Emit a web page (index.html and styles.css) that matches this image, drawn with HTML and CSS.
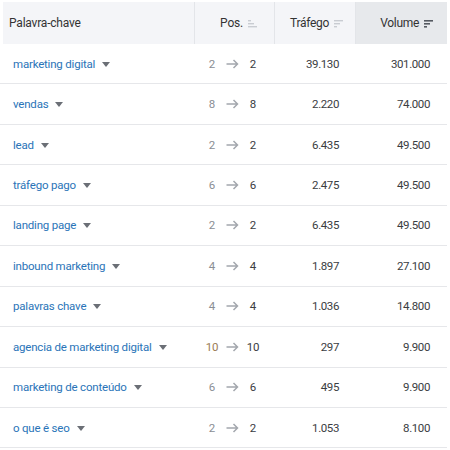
FILE: index.html
```html
<!DOCTYPE html>
<html lang="pt">
<head>
<meta charset="utf-8">
<link rel="stylesheet" href="styles.css">
</head>
<body>
<div class="table">
  <div class="row head">
    <div class="cell kw"><span class="htxt">Palavra-chave</span></div>
    <div class="cell pos"><span class="htxt">Pos.</span>
      <svg class="sort" width="9" height="9" viewBox="0 0 9 9"><rect x="0" y="1" width="3" height="1.4"/><rect x="0" y="4" width="6" height="1.4"/><rect x="0" y="7" width="9" height="1.4"/></svg>
    </div>
    <div class="cell num traf"><span class="htxt">Tráfego</span>
      <svg class="sort" width="9" height="9" viewBox="0 0 9 9"><rect x="0" y="1" width="9" height="1.4"/><rect x="0" y="4" width="6" height="1.4"/><rect x="0" y="7" width="3" height="1.4"/></svg>
    </div>
    <div class="cell num vol"><span class="htxt">Volume</span>
      <svg class="sort active" width="9" height="9" viewBox="0 0 9 9"><rect x="0" y="1" width="9" height="1.6"/><rect x="0" y="4" width="6" height="1.6"/><rect x="0" y="7" width="3" height="1.6"/></svg>
    </div>
  </div>

  <div class="row"><div class="cell kw"><a class="link">marketing digital</a><span class="caret"></span></div><div class="cell pos"><span class="p1">2</span><svg class="arr" width="13" height="10" viewBox="0 0 13 10"><path d="M0.5 5H11.5M7.5 1L11.5 5L7.5 9"/></svg><span class="p2">2</span></div><div class="cell num">39.130</div><div class="cell num">301.000</div></div>
  <div class="row"><div class="cell kw"><a class="link">vendas</a><span class="caret"></span></div><div class="cell pos"><span class="p1">8</span><svg class="arr" width="13" height="10" viewBox="0 0 13 10"><path d="M0.5 5H11.5M7.5 1L11.5 5L7.5 9"/></svg><span class="p2">8</span></div><div class="cell num">2.220</div><div class="cell num">74.000</div></div>
  <div class="row"><div class="cell kw"><a class="link">lead</a><span class="caret"></span></div><div class="cell pos"><span class="p1">2</span><svg class="arr" width="13" height="10" viewBox="0 0 13 10"><path d="M0.5 5H11.5M7.5 1L11.5 5L7.5 9"/></svg><span class="p2">2</span></div><div class="cell num">6.435</div><div class="cell num">49.500</div></div>
  <div class="row"><div class="cell kw"><a class="link">tráfego pago</a><span class="caret"></span></div><div class="cell pos"><span class="p1">6</span><svg class="arr" width="13" height="10" viewBox="0 0 13 10"><path d="M0.5 5H11.5M7.5 1L11.5 5L7.5 9"/></svg><span class="p2">6</span></div><div class="cell num">2.475</div><div class="cell num">49.500</div></div>
  <div class="row"><div class="cell kw"><a class="link">landing page</a><span class="caret"></span></div><div class="cell pos"><span class="p1">2</span><svg class="arr" width="13" height="10" viewBox="0 0 13 10"><path d="M0.5 5H11.5M7.5 1L11.5 5L7.5 9"/></svg><span class="p2">2</span></div><div class="cell num">6.435</div><div class="cell num">49.500</div></div>
  <div class="row"><div class="cell kw"><a class="link">inbound marketing</a><span class="caret"></span></div><div class="cell pos"><span class="p1">4</span><svg class="arr" width="13" height="10" viewBox="0 0 13 10"><path d="M0.5 5H11.5M7.5 1L11.5 5L7.5 9"/></svg><span class="p2">4</span></div><div class="cell num">1.897</div><div class="cell num">27.100</div></div>
  <div class="row"><div class="cell kw"><a class="link">palavras chave</a><span class="caret"></span></div><div class="cell pos"><span class="p1">4</span><svg class="arr" width="13" height="10" viewBox="0 0 13 10"><path d="M0.5 5H11.5M7.5 1L11.5 5L7.5 9"/></svg><span class="p2">4</span></div><div class="cell num">1.036</div><div class="cell num">14.800</div></div>
  <div class="row"><div class="cell kw"><a class="link">agencia de marketing digital</a><span class="caret"></span></div><div class="cell pos"><span class="p1 brown">10</span><svg class="arr" width="13" height="10" viewBox="0 0 13 10"><path d="M0.5 5H11.5M7.5 1L11.5 5L7.5 9"/></svg><span class="p2">10</span></div><div class="cell num">297</div><div class="cell num">9.900</div></div>
  <div class="row"><div class="cell kw"><a class="link">marketing de conteúdo</a><span class="caret"></span></div><div class="cell pos"><span class="p1">6</span><svg class="arr" width="13" height="10" viewBox="0 0 13 10"><path d="M0.5 5H11.5M7.5 1L11.5 5L7.5 9"/></svg><span class="p2">6</span></div><div class="cell num">495</div><div class="cell num">9.900</div></div>
  <div class="row"><div class="cell kw"><a class="link">o que é seo</a><span class="caret"></span></div><div class="cell pos"><span class="p1">2</span><svg class="arr" width="13" height="10" viewBox="0 0 13 10"><path d="M0.5 5H11.5M7.5 1L11.5 5L7.5 9"/></svg><span class="p2">2</span></div><div class="cell num">1.053</div><div class="cell num">8.100</div></div>
</div>
</body>
</html>
```

FILE: styles.css
```css
html, body {
  margin: 0;
  padding: 0;
  background: #ffffff;
}
body {
  font-family: "Roboto", "Open Sans", sans-serif;
  font-size: 11.5px;
  letter-spacing: -0.2px;
  color: #3a3d42;
}
.table {
  width: 447px;
  padding-top: 2px;
}
.row {
  display: grid;
  grid-template-columns: 195px 80px 81px 91px;
  height: 40.45px;
  box-sizing: border-box;
  border-bottom: 1px solid #e6e7ea;
}
.row.head {
  height: 42px;
  border-bottom: none;
  background: #f4f5f8;
  margin-left: 3px;
  grid-template-columns: 192px 80px 81px 91px;
}
.cell {
  display: flex;
  align-items: center;
  box-sizing: border-box;
}
.head .cell {
  border-right: 1px solid #e3e5e9;
  color: #333333;
  font-size: 12px;
}
.head .cell:last-child {
  border-right: none;
}
.head .kw {
  padding-left: 6px;
}
.head .vol {
  background: #e7e9ec;
}
.kw {
  padding-left: 13px;
}
.link {
  color: #2a74b8;
}
.caret {
  display: inline-block;
  width: 0;
  height: 0;
  margin-left: 7px;
  margin-top: 1px;
  border-left: 4.5px solid transparent;
  border-right: 4.5px solid transparent;
  border-top: 5px solid #6b6f76;
}
.pos {
  justify-content: flex-end;
  padding-right: 14px;
}
.head .pos {
  padding-right: 17px;
}
.num {
  justify-content: flex-end;
  padding-right: 17px;
  letter-spacing: -0.4px;
}
.head .num {
  padding-right: 14px;
  letter-spacing: -0.3px;
}
.head .traf {
  padding-right: 12px;
}
.htxt {
  margin-right: 5px;
}
.sort {
  fill: #c9ccd2;
}
.sort.active {
  fill: #555a61;
}
.p1, .p2 {
  display: inline-block;
  width: 16px;
  text-align: center;
}
.p1 {
  color: #8a8e94;
}
.p1.brown {
  color: #9a7b55;
}
.arr {
  fill: none;
  stroke: #a3a7ad;
  stroke-width: 1.5;
  margin: 0 6px 0 6px;
}
```
